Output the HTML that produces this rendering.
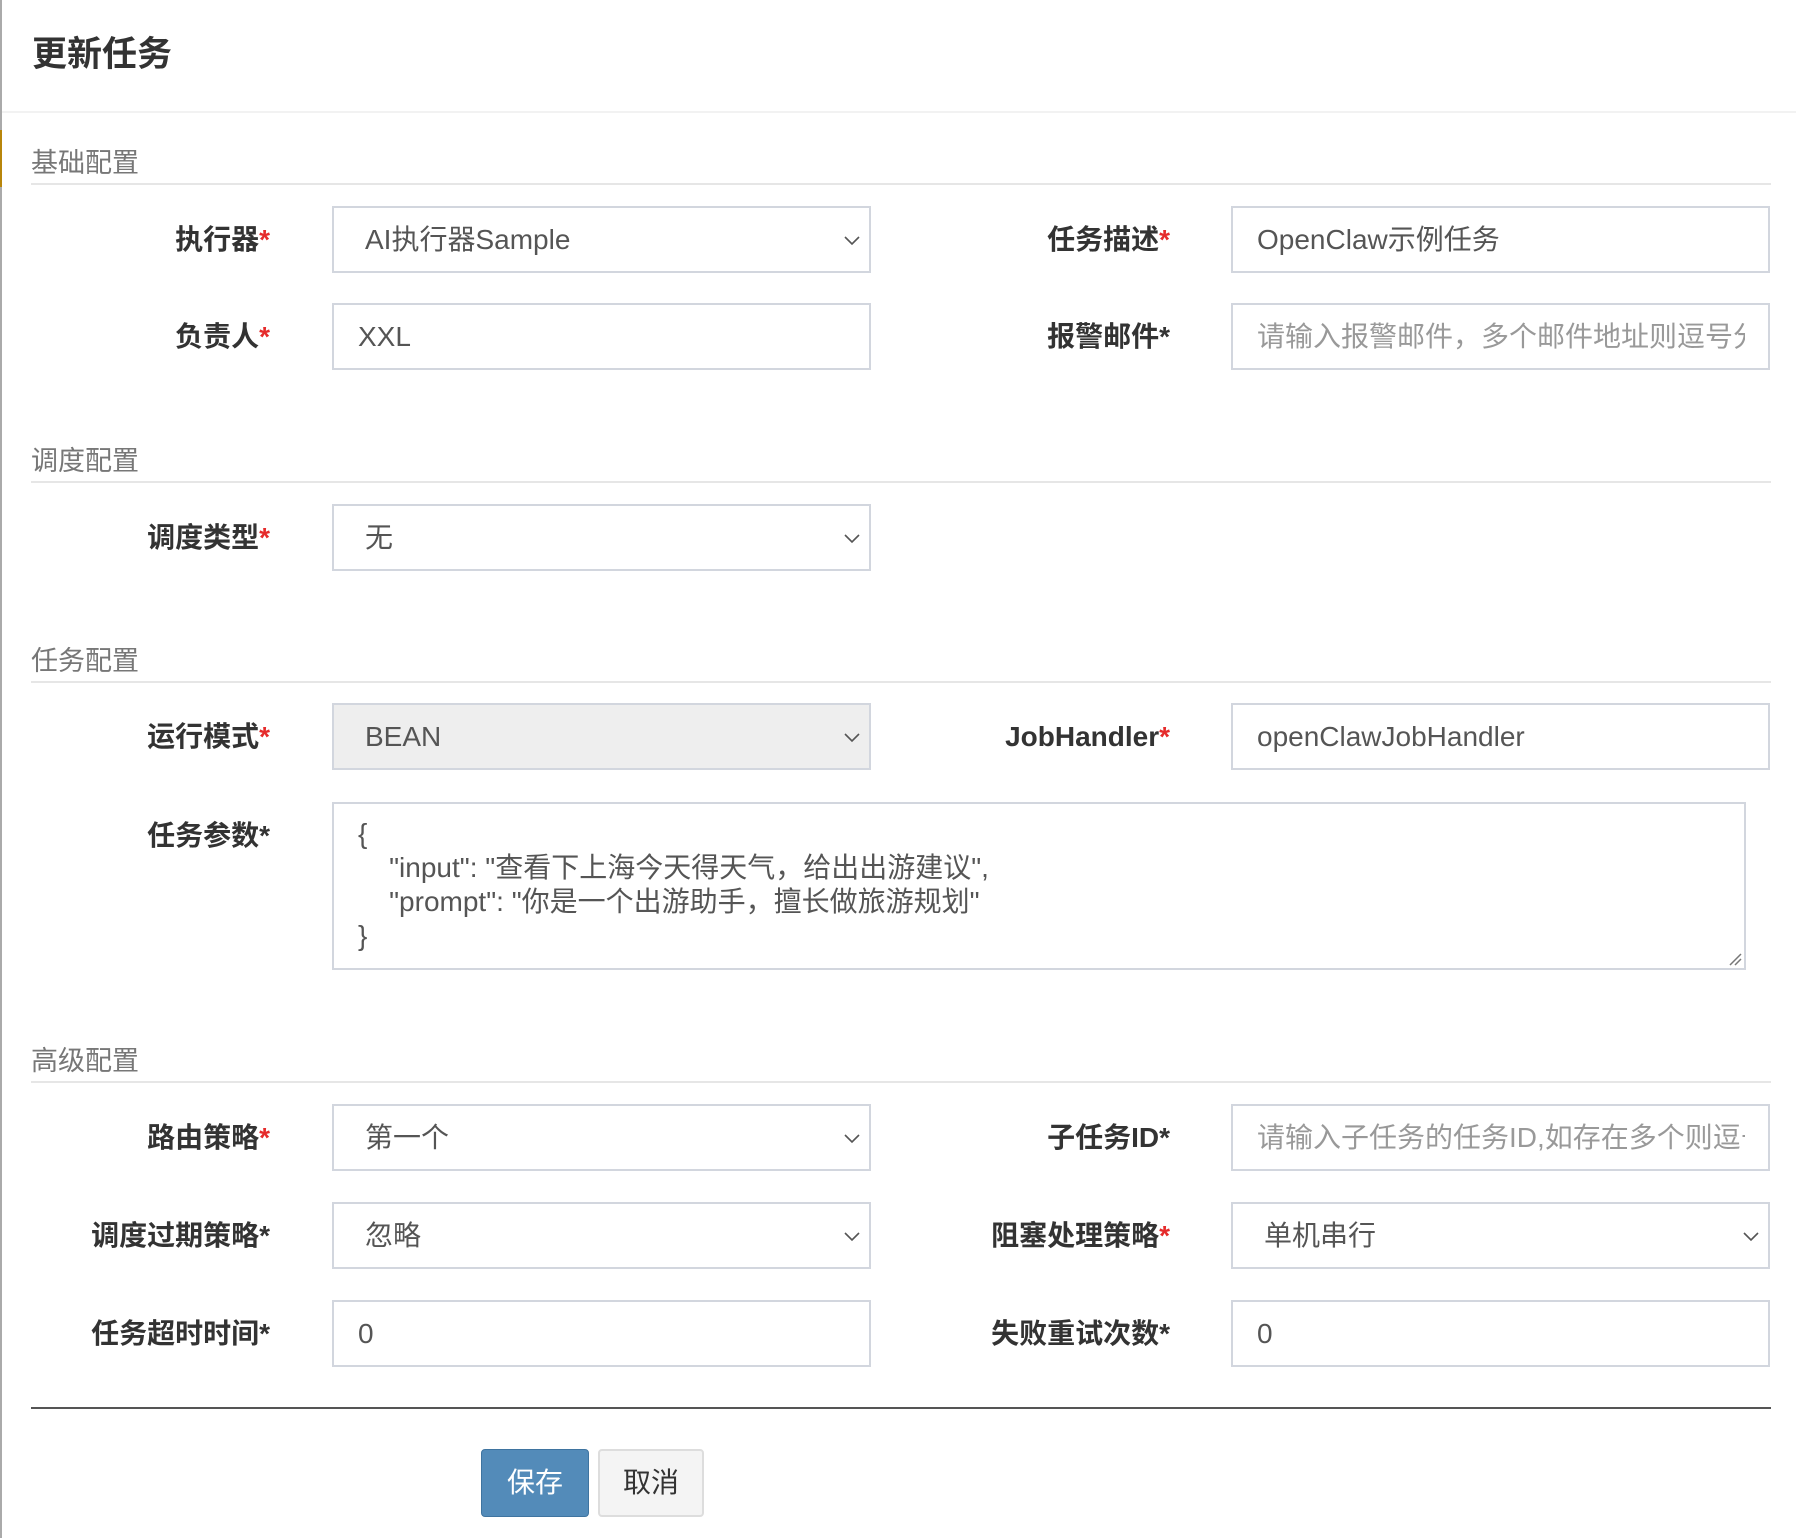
<!DOCTYPE html>
<html><head><meta charset="utf-8"><style>
*{box-sizing:border-box;margin:0;padding:0}
body{width:1796px;height:1538px;background:#fff;position:relative;overflow:hidden;font-family:"Liberation Sans","Noto Sans CJK SC",sans-serif;color:#333}
.a{position:absolute}
.title{left:32px;top:30px;font-size:35px;font-weight:bold;color:#333;line-height:50px}
.sec{left:31px;font-size:27px;color:#777;line-height:34px}
.line{left:31px;width:1740px;height:2px;background:#e6e6e6}
.lbl{font-size:28px;font-weight:bold;color:#333;text-align:right;width:260px;line-height:67px}
.lbl.l{left:10px}
.lbl.r{left:910px}
.lbl .red{color:#e52b2b}
.inp{border:2px solid #d2d6de;height:67px;font-size:28px;color:#555;line-height:63px;padding-left:24px;white-space:nowrap;overflow:hidden;background:#fff}
.inp.l{left:332px;width:539px}
.inp.r{left:1231px;width:539px}
.inp.sel{padding-left:31px}
.ph{color:#999}
.ph span{display:block;width:488px;overflow:hidden}
.chev{position:absolute;right:8px;top:26px;width:18px;height:12px}
</style></head><body>
<div class="a" style="left:0;top:0;width:2px;height:1538px;background:#aaa"></div>
<div class="a" style="left:0;top:130px;width:2px;height:57px;background:#b8860b"></div>
<div class="a title">更新任务</div>
<div class="a" style="left:2px;top:111px;width:1794px;height:2px;background:#f2f2f2"></div>

<div class="a sec" style="top:146px">基础配置</div>
<div class="a line" style="top:183px"></div>

<div class="a lbl l" style="top:206px">执行器<span class="red">*</span></div>
<div class="a inp l sel" style="top:206px">AI执行器Sample<svg class="chev" viewBox="0 0 18 12"><path d="M2 3l7 7 7-7" fill="none" stroke="#555" stroke-width="1.6"/></svg></div>
<div class="a lbl r" style="top:206px">任务描述<span class="red">*</span></div>
<div class="a inp r" style="top:206px">OpenClaw示例任务</div>

<div class="a lbl l" style="top:303px">负责人<span class="red">*</span></div>
<div class="a inp l" style="top:303px">XXL</div>
<div class="a lbl r" style="top:303px">报警邮件*</div>
<div class="a inp r ph" style="top:303px"><span>请输入报警邮件，多个邮件地址则逗号分隔</span></div>

<div class="a sec" style="top:444px">调度配置</div>
<div class="a line" style="top:481px"></div>
<div class="a lbl l" style="top:504px">调度类型<span class="red">*</span></div>
<div class="a inp l sel" style="top:504px">无<svg class="chev" viewBox="0 0 18 12"><path d="M2 3l7 7 7-7" fill="none" stroke="#555" stroke-width="1.6"/></svg></div>

<div class="a sec" style="top:644px">任务配置</div>
<div class="a line" style="top:681px"></div>
<div class="a lbl l" style="top:703px">运行模式<span class="red">*</span></div>
<div class="a inp l sel" style="top:703px;background:#eee">BEAN<svg class="chev" viewBox="0 0 18 12"><path d="M2 3l7 7 7-7" fill="none" stroke="#555" stroke-width="1.6"/></svg></div>
<div class="a lbl r" style="top:703px">JobHandler<span class="red">*</span></div>
<div class="a inp r" style="top:703px">openClawJobHandler</div>

<div class="a lbl l" style="top:802px;line-height:67px">任务参数*</div>
<div class="a" style="left:332px;top:802px;width:1414px;height:168px;border:2px solid #d2d6de;font-size:28px;color:#555;line-height:34px;padding:13px 0 0 24px;white-space:pre">{
    "input": "查看下上海今天得天气，给出出游建议",
    "prompt": "你是一个出游助手，擅长做旅游规划"
}<svg style="position:absolute;right:2px;bottom:2px" width="14" height="14" viewBox="0 0 14 14"><path d="M2 13L13 2M7 13L13 7" stroke="#777" stroke-width="1.5"/></svg></div>

<div class="a sec" style="top:1044px">高级配置</div>
<div class="a line" style="top:1081px"></div>
<div class="a lbl l" style="top:1104px">路由策略<span class="red">*</span></div>
<div class="a inp l sel" style="top:1104px">第一个<svg class="chev" viewBox="0 0 18 12"><path d="M2 3l7 7 7-7" fill="none" stroke="#555" stroke-width="1.6"/></svg></div>
<div class="a lbl r" style="top:1104px">子任务ID*</div>
<div class="a inp r ph" style="top:1104px"><span>请输入子任务的任务ID,如存在多个则逗号分隔</span></div>

<div class="a lbl l" style="top:1202px">调度过期策略*</div>
<div class="a inp l sel" style="top:1202px">忽略<svg class="chev" viewBox="0 0 18 12"><path d="M2 3l7 7 7-7" fill="none" stroke="#555" stroke-width="1.6"/></svg></div>
<div class="a lbl r" style="top:1202px">阻塞处理策略<span class="red">*</span></div>
<div class="a inp r sel" style="top:1202px">单机串行<svg class="chev" viewBox="0 0 18 12"><path d="M2 3l7 7 7-7" fill="none" stroke="#555" stroke-width="1.6"/></svg></div>

<div class="a lbl l" style="top:1300px">任务超时时间*</div>
<div class="a inp l" style="top:1300px">0</div>
<div class="a lbl r" style="top:1300px">失败重试次数*</div>
<div class="a inp r" style="top:1300px">0</div>

<div class="a" style="left:31px;top:1407px;width:1740px;height:2px;background:#555"></div>

<div class="a" style="left:481px;top:1449px;width:108px;height:68px;background:#538bb9;border:1px solid #3f74a0;border-radius:4px;color:#fff;font-size:28px;text-align:center;line-height:66px">保存</div>
<div class="a" style="left:598px;top:1449px;width:106px;height:68px;background:#f4f4f4;border:2px solid #ddd;border-radius:4px;color:#333;font-size:28px;text-align:center;line-height:64px">取消</div>
</body></html>
